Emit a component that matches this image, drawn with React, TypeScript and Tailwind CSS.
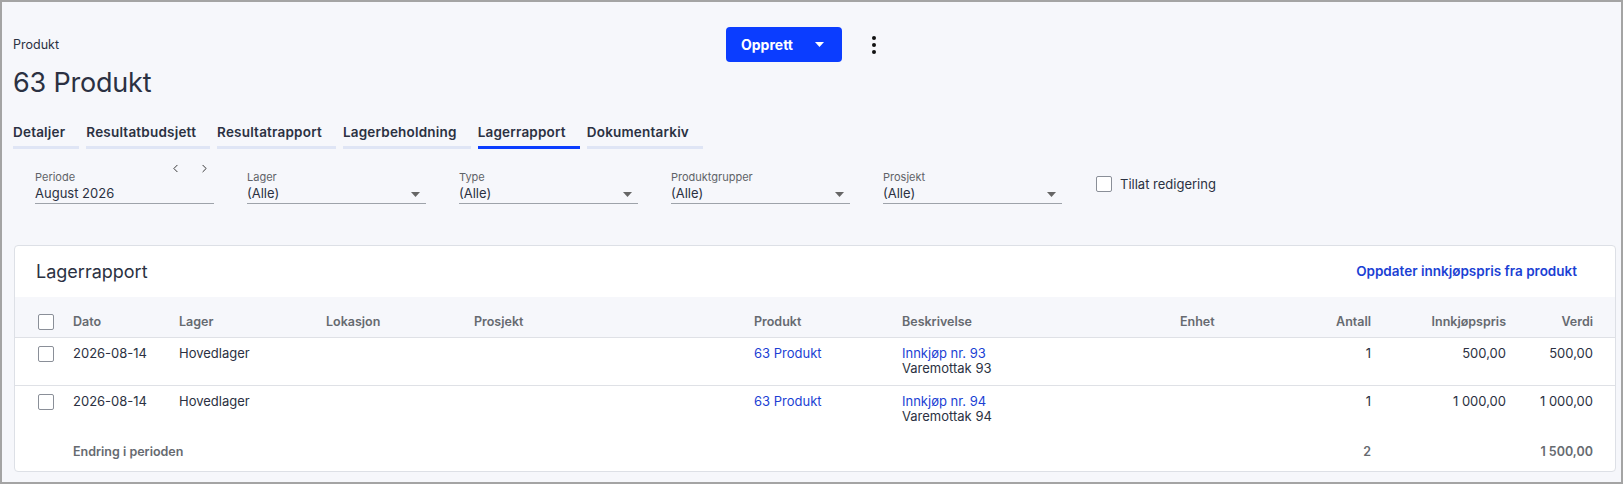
import { ChevronLeft, ChevronRight } from 'lucide-react';

const TABS = ['Detaljer', 'Resultatbudsjett', 'Resultatrapport', 'Lagerbeholdning', 'Lagerrapport', 'Dokumentarkiv'];
const ACTIVE = 'Lagerrapport';

const FILTERS = [
  { label: 'Lager', value: '(Alle)' },
  { label: 'Type', value: '(Alle)' },
  { label: 'Produktgrupper', value: '(Alle)' },
  { label: 'Prosjekt', value: '(Alle)' },
];

const ROWS = [
  { date: '2026-08-14', lager: 'Hovedlager', produkt: '63 Produkt', link: 'Innkjøp nr. 93', desc: 'Varemottak 93', antall: '1', pris: '500,00', verdi: '500,00' },
  { date: '2026-08-14', lager: 'Hovedlager', produkt: '63 Produkt', link: 'Innkjøp nr. 94', desc: 'Varemottak 94', antall: '1', pris: '1 000,00', verdi: '1 000,00' },
];

const GRID = 'grid grid-cols-[58px_106px_147px_148px_280px_148px_278px_70px_121px_135px_87px_1fr]';

function Box() {
  return <span className="block w-[16px] h-[16px] rounded-[2px] border border-[#8a8f98] bg-white" />;
}

function Caret({ className = '' }: { className?: string }) {
  return (
    <svg width="9" height="5" viewBox="0 0 9 5" className={className}>
      <path d="M0 0h9L4.5 5z" fill="currentColor" />
    </svg>
  );
}

export default function App() {
  return (
    <div className="h-[484px] w-full overflow-hidden border-2 border-[#a4a4a4] bg-[#f6f7fb] text-[#2b3142] font-['Inter',sans-serif]">
      <div className="ml-[10px] mr-[5px]">
        {/* Header */}
        <div className="flex items-center h-[35px] mt-[25px]">
          <div className="w-[714px] pl-[1px] text-[12.5px] leading-[18px]">Produkt</div>
          <button className="flex items-center w-[116px] h-[35px] rounded-[4px] bg-[#0b3dff] text-white text-[14px] font-bold pl-[15px]">
            Opprett
            <Caret className="ml-[22px] text-white" />
          </button>
          <div className="ml-[30px] flex flex-col gap-[3px]">
            {[0, 1, 2].map(i => <span key={i} className="block w-[4px] h-[4px] rounded-full bg-[#111]" />)}
          </div>
        </div>
        <h1 className="mt-[4px] pl-[1px] text-[27px] leading-[34px] font-normal tracking-[-0.2px]">63 Produkt</h1>

        {/* Tabs */}
        <div className="flex gap-[7px] mt-[22px] pl-[1px]">
          {TABS.map(t => (
            <div key={t}
              className={`pr-[14px] pb-[4px] text-[13.5px] leading-[20px] font-semibold tracking-[0.2px] border-b-[3px] ${t === ACTIVE ? 'border-[#0b3dff]' : 'border-[#dfe5f5]'}`}>
              {t}
            </div>
          ))}
        </div>

        {/* Filters */}
        <div className="flex items-start mt-[21px] pl-[23px]">
          <div className="w-[179px] border-b border-[#9ea3aa] relative">
            <div className="text-[11px] leading-[14px] text-[#5f6368]">Periode</div>
            <div className="text-[13px] leading-[19px]">August 2026</div>
            <div className="absolute right-[3px] top-[-8px] flex gap-[16px] text-[#333]">
              <ChevronLeft size={13} strokeWidth={1.8} />
              <ChevronRight size={13} strokeWidth={1.8} />
            </div>
          </div>
          {FILTERS.map(f => (
            <div key={f.label} className="w-[179px] ml-[33px] border-b border-[#9ea3aa]">
              <div className="text-[11px] leading-[14px] text-[#5f6368]">{f.label}</div>
              <div className="flex items-center justify-between pr-[6px]">
                <span className="text-[13px] leading-[19px]">{f.value}</span>
                <Caret className="text-[#666] mt-[2px]" />
              </div>
            </div>
          ))}
          <label className="ml-[34px] mt-[5px] flex items-center gap-[8px] text-[13px] leading-[18px]">
            <Box />
            Tillat redigering
          </label>
        </div>

        {/* Card */}
        <div className="mt-[41px] ml-[2px] h-[227px] rounded-[4px] border border-[#dde0e6] bg-white overflow-hidden">
          <div className="flex items-center justify-between h-[51px] pl-[21px] pr-[38px]">
            <h2 className="text-[18px] leading-[24px] font-normal">Lagerrapport</h2>
            <a className="text-[13.5px] font-semibold text-[#1b3fd4]">Oppdater innkjøpspris fra produkt</a>
          </div>
          <div className={`${GRID} items-center h-[41px] pt-[9px] bg-[#f6f7fb] border-b border-[#dfe1e6] text-[12.5px] leading-[16px] font-semibold text-[#666a70]`}>
            <div className="pl-[23px]"><Box /></div>
            <div>Dato</div>
            <div>Lager</div>
            <div>Lokasjon</div>
            <div>Prosjekt</div>
            <div>Produkt</div>
            <div>Beskrivelse</div>
            <div>Enhet</div>
            <div className="text-right">Antall</div>
            <div className="text-right">Innkjøpspris</div>
            <div className="text-right">Verdi</div>
            <div />
          </div>
          {ROWS.map((r, i) => (
            <div key={i} className={`${GRID} pt-[8px] pb-[9px] text-[13px] leading-[15px] ${i === 0 ? 'border-b border-[#dfe1e6]' : ''}`}>
              <div className="pl-[23px]"><Box /></div>
              <div>{r.date}</div>
              <div>{r.lager}</div>
              <div />
              <div />
              <div className="text-[#1b3fd4]">{r.produkt}</div>
              <div>
                <div className="text-[#1b3fd4]">{r.link}</div>
                <div>{r.desc}</div>
              </div>
              <div />
              <div className="text-right">{r.antall}</div>
              <div className="text-right">{r.pris}</div>
              <div className="text-right">{r.verdi}</div>
              <div />
            </div>
          ))}
          <div className={`${GRID} items-center h-[38px] text-[12.5px] font-semibold text-[#666a70]`}>
            <div />
            <div className="col-span-7">Endring i perioden</div>
            <div className="text-right">2</div>
            <div />
            <div className="text-right">1 500,00</div>
            <div />
          </div>
        </div>
      </div>
    </div>
  );
}
